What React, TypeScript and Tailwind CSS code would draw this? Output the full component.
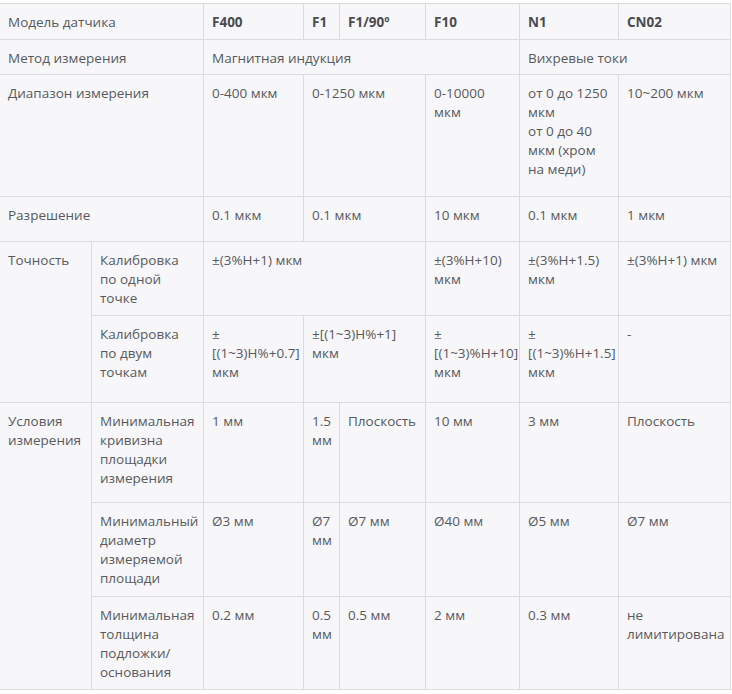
import type { ReactNode } from "react";

const cell = "border border-[#dcdce0] px-2 pt-[9px] pb-0 align-top text-left";

const Td = ({
  children,
  colSpan,
  rowSpan,
  bold,
}: {
  children: ReactNode;
  colSpan?: number;
  rowSpan?: number;
  bold?: boolean;
}) => (
  <td
    colSpan={colSpan}
    rowSpan={rowSpan}
    className={`${cell} ${bold ? "font-bold text-[#4a4b4e]" : ""}`}
  >
    {children}
  </td>
);

export default function App() {
  return (
    <div className="min-h-screen bg-white pt-[3px]">
      <table
        className="ml-[-1px] w-[731px] table-fixed border-collapse bg-[#f7f7f9] text-[13.5px] leading-[19px] text-[#58595d]"
        style={{ fontFamily: '"Open Sans", "Noto Sans", sans-serif' }}
      >
        <colgroup>
          <col className="w-[92px]" />
          <col className="w-[112px]" />
          <col className="w-[100px]" />
          <col className="w-[36px]" />
          <col className="w-[86px]" />
          <col className="w-[94px]" />
          <col className="w-[99px]" />
          <col className="w-[112px]" />
        </colgroup>
        <tbody>
          <tr className="h-[36px]">
            <Td colSpan={2}>Модель датчика</Td>
            <Td bold>F400</Td>
            <Td bold>F1</Td>
            <Td bold>F1/90º</Td>
            <Td bold>F10</Td>
            <Td bold>N1</Td>
            <Td bold>CN02</Td>
          </tr>
          <tr className="h-[35px]">
            <Td colSpan={2}>Метод измерения</Td>
            <Td colSpan={4}>Магнитная индукция</Td>
            <Td colSpan={2}>Вихревые токи</Td>
          </tr>
          <tr className="h-[122px]">
            <Td colSpan={2}>Диапазон измерения</Td>
            <Td>0-400 мкм</Td>
            <Td colSpan={2}>0-1250 мкм</Td>
            <Td>
              0-10000
              <br />
              мкм
            </Td>
            <Td>
              <span className="whitespace-nowrap">от 0 до 1250</span>
              <br />
              мкм
              <br />
              <span className="whitespace-nowrap">от 0 до 40</span>
              <br />
              мкм (хром
              <br />
              на меди)
            </Td>
            <Td>10~200 мкм</Td>
          </tr>
          <tr className="h-[45px]">
            <Td colSpan={2}>Разрешение</Td>
            <Td>0.1 мкм</Td>
            <Td colSpan={2}>0.1 мкм</Td>
            <Td>10 мкм</Td>
            <Td>0.1 мкм</Td>
            <Td>1 мкм</Td>
          </tr>
          <tr className="h-[74px]">
            <Td rowSpan={2}>Точность</Td>
            <Td>
              Калибровка
              <br />
              по одной
              <br />
              точке
            </Td>
            <Td colSpan={3}>±(3%H+1) мкм</Td>
            <Td>
              ±(3%H+10)
              <br />
              мкм
            </Td>
            <Td>
              ±(3%H+1.5)
              <br />
              мкм
            </Td>
            <Td>±(3%H+1) мкм</Td>
          </tr>
          <tr className="h-[87px]">
            <Td>
              Калибровка
              <br />
              по двум
              <br />
              точкам
            </Td>
            <Td>
              ±
              <br />
              <span className="whitespace-nowrap">[(1~3)H%+0.7]</span>
              <br />
              мкм
            </Td>
            <Td colSpan={2}>
              ±[(1~3)H%+1]
              <br />
              мкм
            </Td>
            <Td>
              ±
              <br />
              <span className="whitespace-nowrap">[(1~3)%H+10]</span>
              <br />
              мкм
            </Td>
            <Td>
              ±
              <br />
              <span className="whitespace-nowrap">[(1~3)%H+1.5]</span>
              <br />
              мкм
            </Td>
            <Td>-</Td>
          </tr>
          <tr className="h-[100px]">
            <Td rowSpan={3}>
              Условия
              <br />
              измерения
            </Td>
            <Td>
              Минимальная
              <br />
              кривизна
              <br />
              площадки
              <br />
              измерения
            </Td>
            <Td>1 мм</Td>
            <Td>
              1.5
              <br />
              мм
            </Td>
            <Td>Плоскость</Td>
            <Td>10 мм</Td>
            <Td>3 мм</Td>
            <Td>Плоскость</Td>
          </tr>
          <tr className="h-[94px]">
            <Td>
              <span className="whitespace-nowrap">Минимальный</span>
              <br />
              диаметр
              <br />
              измеряемой
              <br />
              площади
            </Td>
            <Td>Ø3 мм</Td>
            <Td>
              Ø7
              <br />
              мм
            </Td>
            <Td>Ø7 мм</Td>
            <Td>Ø40 мм</Td>
            <Td>Ø5 мм</Td>
            <Td>Ø7 мм</Td>
          </tr>
          <tr className="h-[93px]">
            <Td>
              Минимальная
              <br />
              толщина
              <br />
              подложки/
              <br />
              основания
            </Td>
            <Td>0.2 мм</Td>
            <Td>
              0.5
              <br />
              мм
            </Td>
            <Td>0.5 мм</Td>
            <Td>2 мм</Td>
            <Td>0.3 мм</Td>
            <Td>
              не
              <br />
              <span className="whitespace-nowrap">лимитирована</span>
            </Td>
          </tr>
        </tbody>
      </table>
    </div>
  );
}
